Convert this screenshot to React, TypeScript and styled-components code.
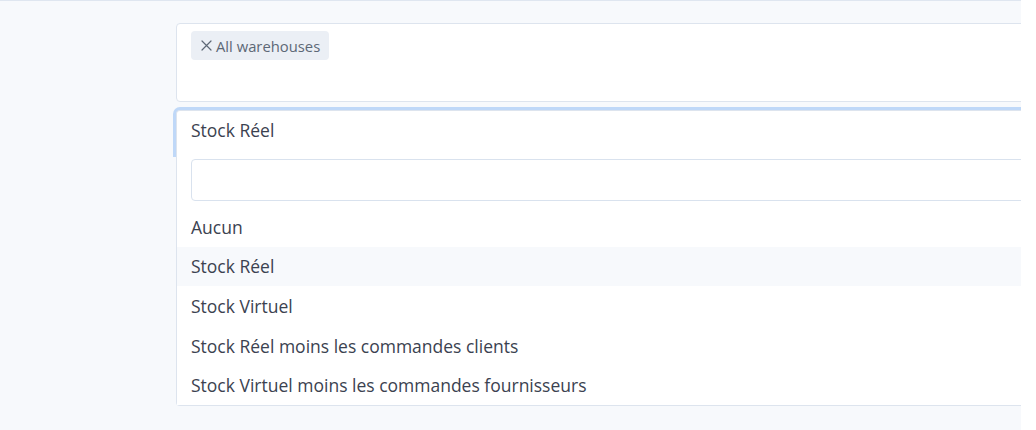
import React from "react";
import styled, { createGlobalStyle } from "styled-components";

const Global = createGlobalStyle`
  html, body { margin: 0; padding: 0; background: #ffffff; }
  body { font-family: "Open Sans", "Noto Sans", sans-serif; }
`;

const Page = styled.div`
  box-sizing: border-box;
  width: 1021px;
  height: 430px;
  overflow: hidden;
  background: #f7f9fc;
  border-top: 1px solid #dfe6f0;
  padding: 22px 0 0 176px;
  display: flex;
  flex-direction: column;
`;

const TagBox = styled.div`
  box-sizing: border-box;
  width: 900px;
  height: 79px;
  flex-shrink: 0;
  background: #ffffff;
  border: 1px solid #dde4ee;
  border-radius: 4px;
  padding: 7px 14px;
  display: flex;
  align-items: flex-start;
`;

const Chip = styled.span`
  display: inline-flex;
  align-items: center;
  gap: 4px;
  height: 29px;
  padding: 0 9px 0 10px;
  border-radius: 4px;
  background: #ebeff5;
  color: #5d6876;
  font-size: 14.8px;
`;

/* focused select: trigger with a ring, its list panel drawn over the ring's lower edge */
const Trigger = styled.div`
  box-sizing: border-box;
  width: 900px;
  height: 44px;
  flex-shrink: 0;
  margin-top: 8px;
  display: flex;
  align-items: flex-start;
  padding: 7px 14px 0;
  background: #ffffff;
  border: 1px solid #dde4ee;
  border-bottom: none;
  border-radius: 4px 4px 0 0;
  box-shadow: 0 0 0 3px #bfd8f8;
  font-size: 17.5px;
  color: #3b4250;
`;

const Panel = styled.div`
  position: relative;
  z-index: 1;
  box-sizing: border-box;
  width: 900px;
  flex-shrink: 0;
  background: #ffffff;
  border: 1px solid #dde4ee;
  border-top: none;
  border-radius: 0 0 4px 4px;
`;

const SearchWrap = styled.div`
  padding: 5px 14px 6px;
`;

const Search = styled.input`
  box-sizing: border-box;
  display: block;
  width: 100%;
  height: 42px;
  border: 1px solid #d9e2ee;
  border-radius: 4px;
  outline: none;
  background: #ffffff;
`;

const Option = styled.div<{ $hover?: boolean }>`
  height: 39.6px;
  display: flex;
  align-items: center;
  padding: 0 14px;
  font-size: 17.5px;
  color: #3b4250;
  background: ${(p) => (p.$hover ? "#f7f9fc" : "#ffffff")};
`;

const XIcon = () => (
  <svg width="11" height="11" viewBox="0 0 11 11" fill="none">
    <path d="M1 1 L10 10 M10 1 L1 10" stroke="#5d6876" strokeWidth="1.2" strokeLinecap="round" />
  </svg>
);

const options = [
  "Aucun",
  "Stock Réel",
  "Stock Virtuel",
  "Stock Réel moins les commandes clients",
  "Stock Virtuel moins les commandes fournisseurs",
];

export default function App() {
  return (
    <>
      <Global />
      <Page>
        <TagBox>
          <Chip>
            <XIcon />
            All warehouses
          </Chip>
        </TagBox>
        <Trigger>Stock Réel</Trigger>
        <Panel>
          <SearchWrap>
            <Search type="text" />
          </SearchWrap>
          {options.map((o, i) => (
            <Option key={o} $hover={i === 1}>
              {o}
            </Option>
          ))}
        </Panel>
      </Page>
    </>
  );
}
